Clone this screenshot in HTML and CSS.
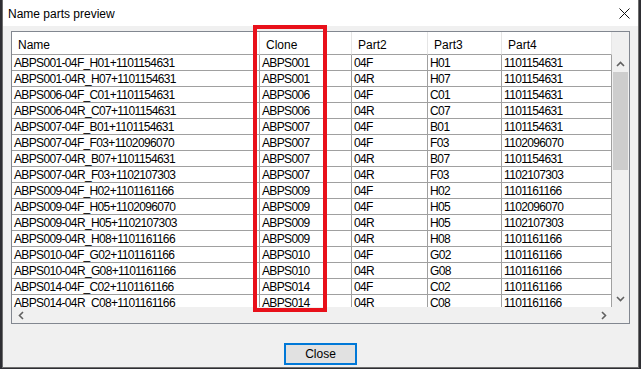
FILE: index.html
```html
<!DOCTYPE html>
<html>
<head>
<meta charset="utf-8">
<link rel="stylesheet" href="styles.css">
</head>
<body>
<div class="window">
  <div class="titlebar">
    <span class="title">Name parts preview</span>
    <svg class="close-x" width="11" height="11" viewBox="0 0 11 11"><path d="M0.5 0.5 L10.5 10.5 M10.5 0.5 L0.5 10.5" stroke="#111" stroke-width="1" fill="none"/></svg>
  </div>
  <div class="content">
    <div class="grid-frame">
      <div class="header">
        <div class="hcell">Name</div>
        <div class="hcell">Clone</div>
        <div class="hcell">Part2</div>
        <div class="hcell">Part3</div>
        <div class="hcell">Part4</div>
        <div class="hfill"></div>
      </div>
      <div class="body">
        <div class="rows">
          <div class="row"><div class="cell">ABPS001-04F_H01+1101154631</div><div class="cell">ABPS001</div><div class="cell">04F</div><div class="cell">H01</div><div class="cell">1101154631</div></div>
          <div class="row"><div class="cell">ABPS001-04R_H07+1101154631</div><div class="cell">ABPS001</div><div class="cell">04R</div><div class="cell">H07</div><div class="cell">1101154631</div></div>
          <div class="row"><div class="cell">ABPS006-04F_C01+1101154631</div><div class="cell">ABPS006</div><div class="cell">04F</div><div class="cell">C01</div><div class="cell">1101154631</div></div>
          <div class="row"><div class="cell">ABPS006-04R_C07+1101154631</div><div class="cell">ABPS006</div><div class="cell">04R</div><div class="cell">C07</div><div class="cell">1101154631</div></div>
          <div class="row"><div class="cell">ABPS007-04F_B01+1101154631</div><div class="cell">ABPS007</div><div class="cell">04F</div><div class="cell">B01</div><div class="cell">1101154631</div></div>
          <div class="row"><div class="cell">ABPS007-04F_F03+1102096070</div><div class="cell">ABPS007</div><div class="cell">04F</div><div class="cell">F03</div><div class="cell">1102096070</div></div>
          <div class="row"><div class="cell">ABPS007-04R_B07+1101154631</div><div class="cell">ABPS007</div><div class="cell">04R</div><div class="cell">B07</div><div class="cell">1101154631</div></div>
          <div class="row"><div class="cell">ABPS007-04R_F03+1102107303</div><div class="cell">ABPS007</div><div class="cell">04R</div><div class="cell">F03</div><div class="cell">1102107303</div></div>
          <div class="row"><div class="cell">ABPS009-04F_H02+1101161166</div><div class="cell">ABPS009</div><div class="cell">04F</div><div class="cell">H02</div><div class="cell">1101161166</div></div>
          <div class="row"><div class="cell">ABPS009-04F_H05+1102096070</div><div class="cell">ABPS009</div><div class="cell">04F</div><div class="cell">H05</div><div class="cell">1102096070</div></div>
          <div class="row"><div class="cell">ABPS009-04R_H05+1102107303</div><div class="cell">ABPS009</div><div class="cell">04R</div><div class="cell">H05</div><div class="cell">1102107303</div></div>
          <div class="row"><div class="cell">ABPS009-04R_H08+1101161166</div><div class="cell">ABPS009</div><div class="cell">04R</div><div class="cell">H08</div><div class="cell">1101161166</div></div>
          <div class="row"><div class="cell">ABPS010-04F_G02+1101161166</div><div class="cell">ABPS010</div><div class="cell">04F</div><div class="cell">G02</div><div class="cell">1101161166</div></div>
          <div class="row"><div class="cell">ABPS010-04R_G08+1101161166</div><div class="cell">ABPS010</div><div class="cell">04R</div><div class="cell">G08</div><div class="cell">1101161166</div></div>
          <div class="row"><div class="cell">ABPS014-04F_C02+1101161166</div><div class="cell">ABPS014</div><div class="cell">04F</div><div class="cell">C02</div><div class="cell">1101161166</div></div>
          <div class="row"><div class="cell">ABPS014-04R_C08+1101161166</div><div class="cell">ABPS014</div><div class="cell">04R</div><div class="cell">C08</div><div class="cell">1101161166</div></div>
        </div>
        <div class="vscroll">
          <div class="sbtn"><svg width="9" height="6" viewBox="0 0 9 6"><path d="M1 5 L4.5 1.5 L8 5" stroke="#606060" stroke-width="1.6" fill="none"/></svg></div>
          <div class="vtrack"><div class="vthumb"></div></div>
          <div class="sbtn"><svg width="9" height="6" viewBox="0 0 9 6"><path d="M1 1 L4.5 4.5 L8 1" stroke="#606060" stroke-width="1.6" fill="none"/></svg></div>
        </div>
      </div>
      <div class="hscroll-row">
        <div class="hscroll">
          <div class="sbtn"><svg width="6" height="9" viewBox="0 0 6 9"><path d="M5 1 L1.5 4.5 L5 8" stroke="#606060" stroke-width="1.6" fill="none"/></svg></div>
          <div class="htrack"></div>
          <div class="sbtn"><svg width="6" height="9" viewBox="0 0 6 9"><path d="M1 1 L4.5 4.5 L1 8" stroke="#606060" stroke-width="1.6" fill="none"/></svg></div>
        </div>
        <div class="corner"></div>
      </div>
    </div>
    <div class="buttons">
      <button class="btn">Close</button>
    </div>
  </div>
  <div class="highlight"></div>
</div>
</body>
</html>
```

FILE: styles.css
```css
html, body {
  margin: 0;
  padding: 0;
}
body {
  background: #2e2e33;
  width: 641px;
  height: 369px;
  overflow: hidden;
  font-family: "Liberation Sans", Arial, sans-serif;
  font-size: 12px;
  color: #000;
}
.window {
  position: relative;
  box-sizing: border-box;
  margin-left: 2px;
  width: 637px;
  height: 368px;
  background: #f0f0f0;
  border: 1px solid #6e6e6e;
  border-top: none;
  display: flex;
  flex-direction: column;
}
.titlebar {
  height: 26px;
  flex: none;
  background: #ffffff;
  display: flex;
  align-items: center;
  justify-content: space-between;
  padding: 0 8px 0 5px;
}
.title {
  font-size: 12px;
  padding-top: 1px;
}
.close-x {
  display: block;
}
.content {
  flex: 1;
  display: flex;
  flex-direction: column;
  padding: 5px 8px 0 8px;
}
.grid-frame {
  box-sizing: border-box;
  width: 619px;
  height: 293px;
  border: 1px solid #828790;
  background: #f0f0f0;
  display: flex;
  flex-direction: column;
}
.header {
  display: grid;
  grid-template-columns: 248px 92px 76px 74px 110px 17px;
  height: 23px;
  flex: none;
}
.hcell {
  box-sizing: border-box;
  background: #fff;
  border-right: 1px solid #e5e5e5;
  border-bottom: 1px solid #a0a0a0;
  padding: 6px 0 0 6px;
  line-height: 14px;
  font-size: 12px;
}
.hfill {
  background: #f0f0f0;
}
.body {
  display: flex;
  height: 252px;
  flex: none;
}
.rows {
  width: 600px;
  height: 252px;
  overflow: hidden;
  background: #fff;
}
.row {
  display: grid;
  grid-template-columns: 248px 92px 76px 74px 110px;
  height: 16px;
}
.cell {
  box-sizing: border-box;
  border-right: 1px solid #a0a0a0;
  border-bottom: 1px solid #a0a0a0;
  padding: 1px 0 0 2px;
  font-family: "Liberation Sans", Arial, sans-serif;
  font-size: 12px;
  letter-spacing: -0.65px;
  line-height: 14px;
  white-space: nowrap;
  overflow: hidden;
}
.vscroll {
  width: 17px;
  display: flex;
  flex-direction: column;
  background: #f0f0f0;
}
.sbtn {
  width: 17px;
  height: 17px;
  flex: none;
  display: flex;
  align-items: center;
  justify-content: center;
}
.sbtn svg {
  display: block;
}
.vtrack {
  flex: 1;
  padding: 0 1px;
}
.vthumb {
  height: 98px;
  background: #cdcdcd;
}
.hscroll-row {
  display: flex;
  height: 16px;
  flex: none;
}
.hscroll {
  width: 600px;
  display: flex;
  background: #f0f0f0;
}
.hscroll .sbtn {
  height: 16px;
}
.htrack {
  flex: 1;
}
.corner {
  width: 17px;
  background: #f0f0f0;
}
.buttons {
  display: flex;
  justify-content: center;
  padding-top: 19px;
}
.btn {
  box-sizing: border-box;
  width: 73px;
  height: 22px;
  margin: 0;
  padding: 0;
  background: #e1e1e1;
  border: 2px solid #0078d7;
  font-family: "Liberation Sans", Arial, sans-serif;
  font-size: 12px;
  color: #000;
}
.highlight {
  position: absolute;
  left: 250px;
  top: 25px;
  width: 74px;
  height: 287px;
  box-sizing: border-box;
  border: 4px solid #e8101a;
}
```
